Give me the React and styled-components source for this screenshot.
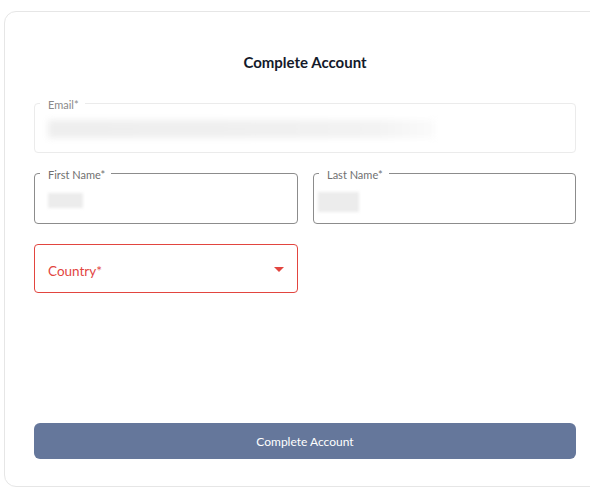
import React from "react";
import styled, { createGlobalStyle } from "styled-components";

const Global = createGlobalStyle`
  html, body { margin: 0; padding: 0; background: #fff; overflow: hidden; }
  body { font-family: Lato, "Open Sans", sans-serif; }
  * { box-sizing: border-box; }
`;

const Page = styled.div`
  padding: 11px 0 0 4px;
  width: 590px;
  height: 496px;
  overflow: hidden;
`;

const Card = styled.div`
  width: 620px;
  height: 476px;
  border: 1px solid #e6e6e6;
  border-radius: 12px;
  padding: 40px 0 27px 29px;
  display: flex;
  flex-direction: column;
`;

const Inner = styled.div`
  width: 542px;
  display: flex;
  flex-direction: column;
  flex: 1;
`;

const Title = styled.h1`
  margin: 0 0 31px;
  font-size: 15px;
  line-height: 20px;
  font-weight: 700;
  color: #141a2a;
  text-align: center;
`;

const Row = styled.div`
  display: flex;
  gap: 15px;
  margin-bottom: 20px;
`;

const Field = styled.div`
  position: relative;
  width: ${(p) => p.$width || "100%"};
  height: ${(p) => p.$height || 50}px;
  border: 1px solid ${(p) => p.$color};
  border-radius: 4px;
  display: flex;
  align-items: center;
  padding-left: ${(p) => p.$pad ?? 13}px;
`;

const Label = styled.span`
  position: absolute;
  top: -5px;
  left: 5px;
  padding: 0 6px 0 8px;
  background: #fff;
  font-size: 11px;
  line-height: 12px;
  color: ${(p) => p.$color || "#707070"};
`;

const Blur = styled.div`
  width: ${(p) => p.$w}px;
  height: ${(p) => p.$h}px;
  margin-top: ${(p) => p.$mt || 0}px;
  background: ${(p) => p.$bg || "#ececec"};
  filter: blur(${(p) => p.$b || 2}px);
`;

const Placeholder = styled.span`
  font-size: 13.5px;
  color: #e2453f;
  margin-top: 4px;
`;

const Caret = styled.div`
  position: absolute;
  right: 13px;
  top: 22px;
  width: 0;
  height: 0;
  border-left: 5px solid transparent;
  border-right: 5px solid transparent;
  border-top: 5px solid #e2453f;
`;

const Spacer = styled.div`
  flex: 1;
`;

const Button = styled.button`
  width: 100%;
  height: 36px;
  border: none;
  border-radius: 6px;
  background: #65779b;
  color: #fff;
  font-family: inherit;
  font-size: 12px;
  cursor: pointer;
`;

export default function App() {
  return (
    <>
      <Global />
      <Page>
        <Card>
          <Inner>
            <Title>Complete Account</Title>
            <Row>
              <Field $color="#ebebeb">
                <Label $color="#8a8a8a">Email*</Label>
                <Blur
                  $w={387}
                  $h={18}
                  $mt={2}
                  $b={3}
                  $bg="linear-gradient(90deg, #eeeeee 0%, #f0f0f0 60%, #f3f3f3 85%, #fbfbfb 100%)"
                />
              </Field>
            </Row>
            <Row>
              <Field $width="264px" $height={51} $color="#8c8c8c">
                <Label>First Name*</Label>
                <Blur $w={35} $h={15} $mt={4} $b={1.5} />
              </Field>
              <Field $width="263px" $height={51} $color="#8c8c8c" $pad={4}>
                <Label>Last Name*</Label>
                <Blur $w={41} $h={20} $mt={6} $b={1.5} />
              </Field>
            </Row>
            <Row>
              <Field $width="264px" $height={49} $color="#e2453f">
                <Placeholder>Country*</Placeholder>
                <Caret />
              </Field>
            </Row>
            <Spacer />
            <Button>Complete Account</Button>
          </Inner>
        </Card>
      </Page>
    </>
  );
}
